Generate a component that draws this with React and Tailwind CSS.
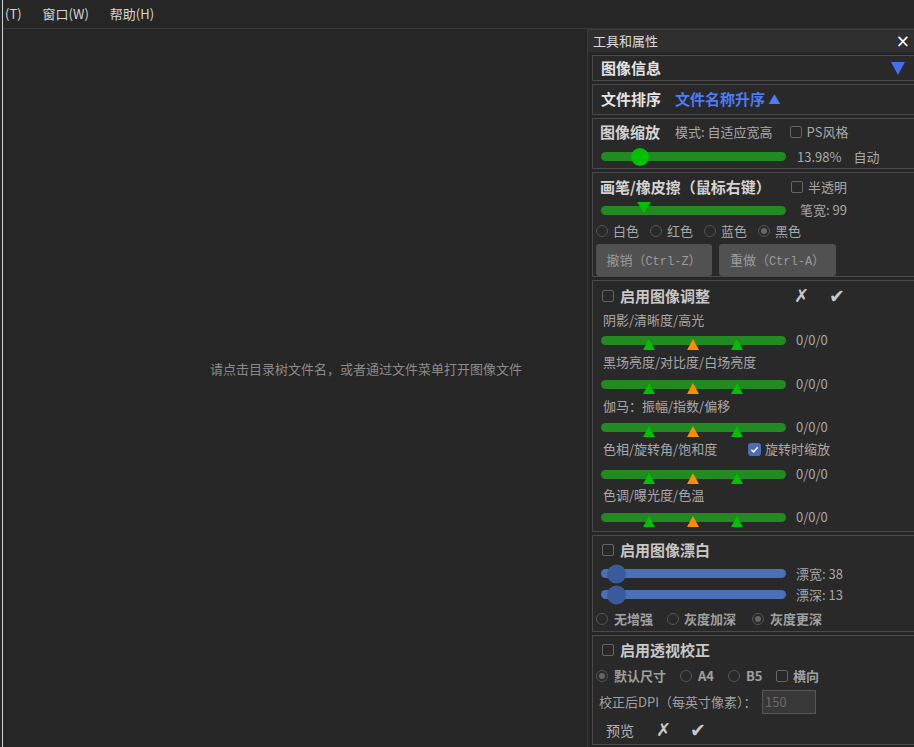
import React from "react";

const FONT = "font-['Noto_Sans_CJK_SC','Noto_Sans',sans-serif]";

function Check({ checked }) {
  if (checked) {
    return (
      <span className="inline-flex w-[13px] h-[13px] rounded-[3px] bg-[#4b6cb7] items-center justify-center shrink-0">
        <svg width="9" height="9" viewBox="0 0 10 10">
          <polyline points="1.5,5.2 4,7.6 8.6,2.4" fill="none" stroke="#ffffff" strokeWidth="1.6" />
        </svg>
      </span>
    );
  }
  return <span className="inline-block w-[12px] h-[12px] rounded-[2px] border border-[#656565] bg-[#282828] shrink-0" />;
}

function Radio({ checked }) {
  return (
    <span className="inline-flex w-[12px] h-[12px] rounded-full border border-[#555] items-center justify-center shrink-0">
      {checked && <span className="w-[6px] h-[6px] rounded-full bg-[#666]" />}
    </span>
  );
}

function Cross({ className = "" }) {
  return (
    <span className={`font-['DejaVu_Sans',sans-serif] text-[18px] leading-none font-bold text-[#c8c8c8] ${className}`}>✗</span>
  );
}

function Tick({ className = "" }) {
  return (
    <span className={`font-['DejaVu_Sans',sans-serif] text-[19px] leading-none text-[#c8c8c8] ${className}`}>✔</span>
  );
}

function TriSlider() {
  return (
    <div className="relative w-[185px] h-[9px] rounded-full bg-[#218a21] shrink-0">
      <span className="absolute left-[42px] top-[3px] w-0 h-0 border-l-[6px] border-r-[6px] border-b-[11px] border-l-transparent border-r-transparent border-b-[#00c000]" />
      <span className="absolute left-[86px] top-[3px] w-0 h-0 border-l-[6px] border-r-[6px] border-b-[11px] border-l-transparent border-r-transparent border-b-[#ff8c00]" />
      <span className="absolute left-[130px] top-[3px] w-0 h-0 border-l-[6px] border-r-[6px] border-b-[11px] border-l-transparent border-r-transparent border-b-[#00c000]" />
    </div>
  );
}

function AdjustRow({ label, extra, labelH, sliderH }) {
  return (
    <>
      <div className={`flex items-center pl-[10px] text-[13px] text-[#a8a8a8] ${labelH}`}>
        <span className="w-[145px] whitespace-nowrap">{label}</span>
        {extra}
      </div>
      <div className={`flex items-center pl-[8px] ${sliderH}`}>
        <TriSlider />
        <span className="ml-[10px] text-[13px] text-[#a8a8a8]">0/0/0</span>
      </div>
    </>
  );
}

function BlueSlider({ label }) {
  return (
    <>
      <div className="relative w-[185px] h-[9px] rounded-full bg-[#4a70b8] shrink-0">
        <span className="absolute left-[6px] top-1/2 -translate-y-1/2 w-[19px] h-[19px] rounded-full bg-[#3a5b9b]" />
      </div>
      <span className="ml-[10px] text-[13px] text-[#a8a8a8]">{label}</span>
    </>
  );
}

function Box({ h, children, className = "" }) {
  return (
    <div className={`w-[324px] border border-[#4a4a4a] bg-[#292929] flex flex-col ${h} ${className}`}>
      {children}
    </div>
  );
}

export default function App() {
  return (
    <div className={`w-[914px] h-[747px] overflow-hidden bg-[#262626] flex ${FONT}`}>
      <div className="w-[2px]" />
      <div className="w-[1px] bg-[#cfcfcf]" />
      <div className="flex-1 flex flex-col min-w-0">
        {/* menu bar */}
        <div className="h-[29px] shrink-0 border-b border-[#383838] flex items-center text-[13px] text-[#d6d6d6]">
          <span className="ml-[2px]">(T)</span>
          <span className="ml-[21px]">窗口(W)</span>
          <span className="ml-[21px]">帮助(H)</span>
        </div>

        <div className="flex-1 flex min-h-0">
          <div className="flex-1 pt-[331px] pl-[207px] text-[13px] text-[#8a8a8a] leading-[18px]">
            请点击目录树文件名，或者通过文件菜单打开图像文件
          </div>

          {/* tool panel */}
          <div className="w-[327px] shrink-0 border-l border-[#3a3a3a] overflow-hidden flex flex-col">
            <div className="h-[23px] shrink-0 bg-[#2f2f2f] border-t border-[#3c3c3c] flex items-center pl-[5px] pr-[4px] text-[13px] text-[#dcdcdc]">
              <span>工具和属性</span>
              <span className="ml-auto text-[17px] leading-none text-white font-['DejaVu_Sans',sans-serif]">×</span>
            </div>

            <div className="flex flex-col gap-[3px] pl-[4px] pt-[3px]">
              <Box h="h-[26px]" className="flex-row items-center pl-[8px] pr-[10px]">
                <span className="text-[15px] font-bold text-[#e4e4e4]">图像信息</span>
                <span className="ml-auto w-0 h-0 border-l-[7px] border-r-[7px] border-t-[13px] border-l-transparent border-r-transparent border-t-[#4470f0]" />
              </Box>

              <Box h="h-[31px]" className="flex-row items-center pl-[8px]">
                <span className="text-[15px] font-bold text-[#e4e4e4]">文件排序</span>
                <span className="ml-[14px] text-[15px] font-bold text-[#4d7cf4]">
                  文件名称升序 <span className="text-[12px]">▲</span>
                </span>
              </Box>

              <Box h="h-[51px]">
                <div className="h-[26px] flex items-center pl-[7px]">
                  <span className="text-[15px] font-bold text-[#d4d4d4]">图像缩放</span>
                  <span className="ml-[15px] text-[13px] text-[#a8a8a8]">模式: 自适应宽高</span>
                  <span className="ml-[17px] flex"><Check /></span>
                  <span className="ml-[5px] text-[13px] text-[#a8a8a8]">PS风格</span>
                </div>
                <div className="h-[23px] flex items-center pl-[8px]">
                  <div className="relative w-[185px] h-[9px] rounded-full bg-[#218a21] shrink-0">
                    <span className="absolute left-[30px] top-1/2 -translate-y-1/2 w-[18px] h-[18px] rounded-full bg-[#00c000]" />
                  </div>
                  <span className="ml-[11px] text-[13px] text-[#a8a8a8]">13.98%</span>
                  <span className="ml-[12px] text-[13px] text-[#a8a8a8]">自动</span>
                </div>
              </Box>

              <Box h="h-[105px]">
                <div className="h-[28px] flex items-center pl-[7px]">
                  <span className="w-[191px] text-[15px] font-bold text-[#d4d4d4]">画笔/橡皮擦（鼠标右键）</span>
                  <Check />
                  <span className="ml-[5px] text-[13px] text-[#a8a8a8]">半透明</span>
                </div>
                <div className="h-[18px] flex items-center pl-[8px]">
                  <div className="relative w-[185px] h-[9px] rounded-full bg-[#218a21] shrink-0">
                    <span className="absolute left-[36px] -top-[4px] w-0 h-0 border-l-[7px] border-r-[7px] border-t-[11px] border-l-transparent border-r-transparent border-t-[#00c000]" />
                  </div>
                  <span className="ml-[14px] text-[13px] text-[#a8a8a8]">笔宽: 99</span>
                </div>
                <div className="h-[24px] flex items-center pl-[3px] text-[13px] text-[#a8a8a8]">
                  <Radio /><span className="ml-[5px] w-[37px]">白色</span>
                  <Radio /><span className="ml-[5px] w-[37px]">红色</span>
                  <Radio /><span className="ml-[5px] w-[37px]">蓝色</span>
                  <Radio checked /><span className="ml-[5px]">黑色</span>
                </div>
                <div className="h-[33px] flex items-start pl-[3px] gap-[7px]">
                  <div className="mt-[1px] w-[116px] h-[32px] rounded-[3px] bg-[#515151] text-center leading-[31px] text-[13px] text-[#9a9a9a] whitespace-nowrap">
                    撤销（<span className="font-['Liberation_Mono',monospace] text-[12px]">Ctrl-Z</span>）
                  </div>
                  <div className="mt-[1px] w-[117px] h-[32px] rounded-[3px] bg-[#515151] text-center leading-[31px] text-[13px] text-[#9a9a9a] whitespace-nowrap">
                    重做（<span className="font-['Liberation_Mono',monospace] text-[12px]">Ctrl-A</span>）
                  </div>
                </div>
              </Box>

              <Box h="h-[252px]">
                <div className="h-[30px] flex items-center pl-[9px]">
                  <Check />
                  <span className="ml-[6px] w-[174px] text-[15px] font-bold text-[#c8c8c8]">启用图像调整</span>
                  <Cross />
                  <Tick className="ml-[20px]" />
                </div>
                <AdjustRow label="阴影/清晰度/高光" labelH="h-[18px]" sliderH="h-[22px]" />
                <AdjustRow label="黑场亮度/对比度/白场亮度" labelH="h-[22px]" sliderH="h-[22px]" />
                <AdjustRow label="伽马：振幅/指数/偏移" labelH="h-[22px]" sliderH="h-[20px]" />
                <AdjustRow
                  label="色相/旋转角/饱和度"
                  labelH="h-[24px]"
                  sliderH="h-[26px]"
                  extra={
                    <>
                      <Check checked />
                      <span className="ml-[4px]">旋转时缩放</span>
                    </>
                  }
                />
                <AdjustRow label="色调/曝光度/色温" labelH="h-[16px]" sliderH="h-[28px]" />
              </Box>

              <Box h="h-[97px]">
                <div className="h-[28px] flex items-center pl-[9px]">
                  <Check />
                  <span className="ml-[6px] text-[15px] font-bold text-[#c8c8c8]">启用图像漂白</span>
                </div>
                <div className="h-[19px] flex items-center pl-[8px]">
                  <BlueSlider label="漂宽: 38" />
                </div>
                <div className="h-[23px] flex items-center pl-[8px]">
                  <BlueSlider label="漂深: 13" />
                </div>
                <div className="h-[25px] flex items-center pl-[3px] text-[13px] font-bold text-[#a0a0a0]">
                  <Radio /><span className="ml-[6px] w-[53px]">无增强</span>
                  <Radio /><span className="ml-[5px] w-[68px]">灰度加深</span>
                  <Radio checked /><span className="ml-[6px]">灰度更深</span>
                </div>
              </Box>

              <Box h="h-[110px]">
                <div className="h-[28px] flex items-center pl-[9px]">
                  <Check />
                  <span className="ml-[6px] text-[15px] font-bold text-[#c8c8c8]">启用透视校正</span>
                </div>
                <div className="h-[24px] flex items-center pl-[3px] text-[13px] font-bold text-[#a0a0a0]">
                  <Radio checked /><span className="ml-[6px] w-[66px]">默认尺寸</span>
                  <Radio /><span className="ml-[6px] w-[30px]">A4</span>
                  <Radio /><span className="ml-[6px] w-[30px]">B5</span>
                  <Check /><span className="ml-[5px]">横向</span>
                </div>
                <div className="h-[28px] flex items-center pl-[6px] text-[13px] text-[#a0a0a0]">
                  <span className="w-[163px] whitespace-nowrap">校正后DPI（每英寸像素）：</span>
                  <div className="w-[54px] h-[24px] bg-[#383838] border border-[#575757] flex items-center pl-[2px] text-[13px] text-[#6a6a6a]">
                    150
                  </div>
                </div>
                <div className="h-[28px] flex items-center pl-[13px] text-[14px] text-[#b4b4b4]">
                  <span>预览</span>
                  <Cross className="ml-[22px]" />
                  <Tick className="ml-[19px]" />
                </div>
              </Box>
            </div>
          </div>
        </div>
      </div>
    </div>
  );
}
